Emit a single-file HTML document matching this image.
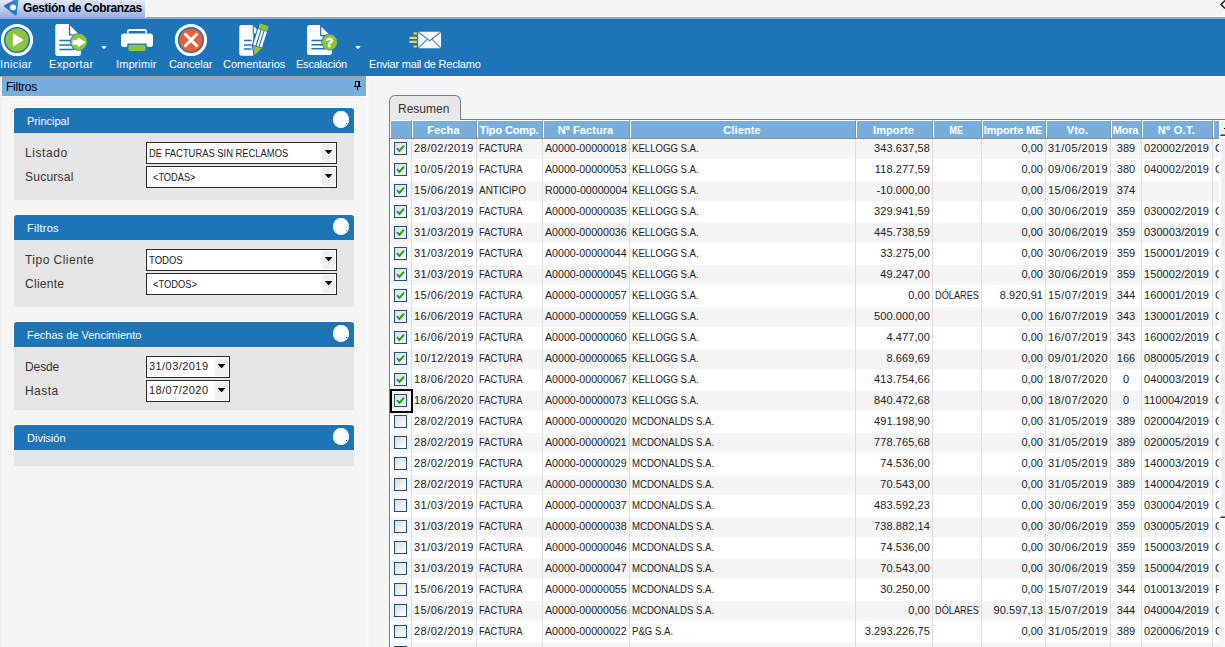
<!DOCTYPE html>
<html lang="es"><head><meta charset="utf-8"><title>Gestión de Cobranzas</title>
<style>
html,body{margin:0;padding:0;}
body{width:1225px;height:647px;overflow:hidden;position:relative;background:#f5f5f5;
 font-family:"Liberation Sans",sans-serif;font-size:11px;color:#222;}
div,span,i,b{box-sizing:border-box;}
.abs{position:absolute;}

/* window title tab */
.wtab{position:absolute;left:0;top:0;width:146px;height:18px;
 background:linear-gradient(#e2e9f9 0%,#c3d1f2 45%,#92abe2 100%);border-right:1px solid #fff;}
.wtab span{position:absolute;left:23px;top:1px;font-weight:bold;font-size:12px;color:#000;white-space:nowrap;letter-spacing:-0.39px;}
.wline1{position:absolute;left:146px;right:0;top:16px;height:1px;background:#fdfdfd;}
.wline2{position:absolute;left:146px;right:0;top:17px;height:1px;background:#a0a0a0;}
.wline3{position:absolute;left:0;right:0;top:18px;height:1px;background:#8aa8dc;}

/* toolbar */
.tb{position:absolute;left:0;top:19px;width:1225px;height:57px;background:#1d74b7;}
.tb .lbl{position:absolute;top:38px;color:#fff;font-size:11px;white-space:nowrap;line-height:14px;}
.tb svg{position:absolute;overflow:visible;}
.tbline{position:absolute;left:0;top:76px;width:366px;height:1px;background:#a2a2a2;}
.tbline2{position:absolute;left:366px;top:76px;width:859px;height:1px;background:#fff;}
.dline{position:absolute;left:2px;top:96px;width:364px;height:1px;background:#fdfdfd;}

/* dock panel */
.dockl{position:absolute;left:0;top:77px;width:2px;height:570px;background:#efefef;}
.dhead{position:absolute;left:2px;top:77px;width:364px;height:19px;background:#78aedc;border-right:1px solid #a2a2a2;}
.dhead span{position:absolute;left:4px;top:3px;font-size:12px;color:#000;}
.dstrip{position:absolute;left:366px;top:77px;width:3px;height:570px;background:#f8f8f8;}

.ph{position:absolute;left:14px;width:340px;height:25px;background:#1d74b7;border-radius:3px 3px 0 0;box-shadow:0 -1px 0 #fafafa,-1px 0 0 #fafafa,1px 0 0 #fafafa;}
.ph span{position:absolute;left:13px;top:7px;color:#fff;font-size:11px;white-space:nowrap;}
.ph i{position:absolute;left:319px;top:3px;width:16px;height:17px;border-radius:50%;background:#fff;box-shadow:inset 0 0 0 1px #eaeef2;}
.ph i:after{content:"";position:absolute;left:13px;top:12px;width:1px;height:1px;background:#1d74b7;}
.pb{position:absolute;left:14px;width:340px;background:#e6e6e6;}
.fl{position:absolute;left:25px;font-size:12px;line-height:15px;color:#333;white-space:nowrap;}
.combo{position:absolute;left:146px;height:22px;border:1px solid #2a2a2a;background:#fff;}
.combo span{position:absolute;left:2px;top:4px;font-size:11px;color:#222;white-space:nowrap;transform-origin:0 50%;}
.combo i{position:absolute;right:1px;top:1px;width:13px;height:18px;background:#f0f0f0;}
.combo i:after{content:"";position:absolute;left:2.8px;top:6px;width:7.6px;height:4.4px;background:#000;clip-path:polygon(0 0,100% 0,50% 100%);}

/* tabs + grid */
.tabstrip{position:absolute;left:389px;top:95px;width:836px;height:26px;}
.tabstrip:after{content:"";position:absolute;left:71px;right:0;top:24px;height:1px;background:#6f808c;box-shadow:0 1px 0 #fff;}
.tabstrip:before{content:"";position:absolute;left:0;top:24px;width:1px;height:600px;background:#6f808c;}
.tab{position:absolute;left:0;top:0;width:72px;height:25px;border:1px solid #6f808c;border-bottom:0;border-radius:6px 6px 0 0;background:#e8e8e8;}
.tab span{position:absolute;left:8px;top:6px;font-size:12px;color:#333;}

.grid{position:absolute;left:390px;top:120px;width:829px;height:527px;overflow:hidden;background:#fff;}
.ghead{position:absolute;left:0;top:0;width:900px;height:19px;background:#78aedc;border-bottom:1px solid #8e8e8e;}
.hc{position:absolute;top:0;height:18px;border-top:1px solid #fff;border-left:1px solid #fff;border-right:1px solid #8c8c8c;text-align:center;color:#fff;font-size:11px;font-weight:bold;white-space:nowrap;overflow:hidden;padding-right:2px;}
.hc span{position:relative;top:3px;}
.gr{position:absolute;left:0;width:900px;height:21px;background:#fff;}
.gr.odd{background:#f5f5f5;border-bottom:1px solid #fff;}
.c{position:absolute;top:0;height:21px;line-height:18px;font-size:11px;color:#222;white-space:nowrap;overflow:hidden;padding:0 3px 0 2px;}
.c.ar{text-align:right;}
.c.ac{text-align:center;}
.vl{position:absolute;top:19px;width:1px;height:600px;background:#dedede;}
.cb{position:absolute;left:4px;top:3px;width:13px;height:13px;border:1px solid #1c5180;background:linear-gradient(135deg,#dcdcd8,#fff);}
.cb svg{position:absolute;left:0;top:0;}
.focus{position:absolute;left:0;width:23px;height:24px;border:2px solid #000;z-index:3;}

.vsb{position:absolute;left:1219px;top:120px;width:6px;height:527px;background:#f8f8f8;}
.vsb-btn{position:absolute;left:0;top:0;width:6px;height:16px;background:#f0f0f0;border-left:2px solid #fff;border-top:2px solid #fff;border-bottom:1px solid #404040;box-shadow:inset 0 -1px 0 #909090;}
.vsb-btn span{position:absolute;left:3px;top:6px;width:1px;height:1px;background:#000;}
.vsb-thumb{position:absolute;left:0;top:16px;width:6px;height:382px;background:#f0f0f0;border-left:2px solid #fff;border-top:2px solid #fff;border-bottom:1px solid #404040;box-shadow:inset 0 -1px 0 #909090;}
.sx{display:inline-block;transform-origin:0 50%;}
.hc span{display:inline-block;transform-origin:50% 50%;}
.wl120{position:absolute;left:390px;top:120px;width:835px;height:1px;background:#fff;}

</style></head>
<body>
<!-- window title -->
<div class="wtab">
<svg class="abs" style="left:3px;top:0" width="18" height="17" viewBox="0 0 18 17"><defs><linearGradient id="lg" x1="1" y1="0" x2="0" y2="1"><stop offset="0" stop-color="#2e93c8"/><stop offset="1" stop-color="#1868b0"/></linearGradient></defs><path d="M2.4 6.1 L14.4 -0.4 L12.5 14.4 Z" fill="url(#lg)" stroke="url(#lg)" stroke-width="2.4" stroke-linejoin="round"/><circle cx="10" cy="7.4" r="2.9" fill="#fff"/></svg>
<span>Gestión de Cobranzas</span></div>
<div class="wline1"></div><div class="wline2"></div><div class="wline3"></div>
<svg class="abs" style="left:1218px;top:0" width="7" height="10" viewBox="0 0 7 10"><path d="M7 0.5 L3 4.5 L7 8.5" fill="none" stroke="#111" stroke-width="1.35"/></svg>

<!-- toolbar -->
<div class="tb">
<!-- Iniciar -->
<svg style="left:0;top:4px" width="34" height="34" viewBox="0 0 34 34"><circle cx="17" cy="17" r="14.6" fill="none" stroke="#fff" stroke-width="3"/><circle cx="17" cy="17" r="11.5" fill="#8bc43f"/><path d="M14 12.2 L21.8 17 L14 21.8 Z" fill="#fff" stroke="#fff" stroke-width="2.2" stroke-linejoin="round"/></svg>
<span class="lbl" style="left:0px;letter-spacing:0.38px">Iniciar</span>
<!-- Exportar -->
<svg style="left:54px;top:4px" width="36" height="34" viewBox="0 0 36 34"><path d="M3.5 1 H14.9 V12.6 H26.9 V30.7 Q26.9 32.9 24.7 32.9 H3.5 Q1.3 32.9 1.3 30.7 V3.2 Q1.3 1 3.5 1 Z" fill="#fff"/><path d="M16.1 2.6 L25 11.5 H17.5 Q16.1 11.5 16.1 10.1 Z" fill="#fff"/><path d="M5.3 17.4 H20 M5.3 22 H20 M5.3 26.4 H20" stroke="#1d74b7" stroke-width="1.5"/><circle cx="24.9" cy="18.95" r="8.9" fill="#1d74b7"/><circle cx="24.9" cy="18.95" r="8.1" fill="#8bc43f"/><path d="M18.9 17.4 H24 V15 L31.3 19.3 L24 23.8 V21.2 H18.9 Z" fill="#fff" stroke="#fff" stroke-width="0.8" stroke-linejoin="round"/></svg>
<svg style="left:101px;top:27px" width="6" height="4" viewBox="0 0 6 4"><path d="M0.2 0 H5.8 L3 3.2 Z" fill="#fff"/></svg>
<span class="lbl" style="left:49px;letter-spacing:0.36px">Exportar</span>
<!-- Imprimir -->
<svg style="left:120px;top:9px" width="34" height="24" viewBox="0 0 34 24"><path d="M7.9 5 V3.4 Q7.9 2 9.3 2 H24.7 Q26.1 2 26.1 3.4 V5" fill="none" stroke="#fff" stroke-width="1.8"/><path d="M4 5.6 H30 Q33 5.6 33 8.6 V16 Q33 19 30 19 H28.4 Q26.6 19 26.6 17.2 V15.4 H7.4 V17.2 Q7.4 19 5.6 19 H4 Q1 19 1 16 V8.6 Q1 5.6 4 5.6 Z" fill="#fff"/><rect x="8.4" y="16.8" width="17.2" height="6.2" rx="1.6" fill="#8bc43f"/></svg>
<span class="lbl" style="left:116px;letter-spacing:0.09px">Imprimir</span>
<!-- Cancelar -->
<svg style="left:174px;top:4px" width="34" height="34" viewBox="0 0 34 34"><circle cx="17" cy="17" r="14.6" fill="none" stroke="#fff" stroke-width="3"/><circle cx="17" cy="17" r="11.5" fill="#f05c36"/><path d="M11.4 11.4 L22.6 22.6 M22.6 11.4 L11.4 22.6" stroke="#fff" stroke-width="3" stroke-linecap="round"/></svg>
<span class="lbl" style="left:169px;letter-spacing:-0.1px">Cancelar</span>
<!-- Comentarios -->
<svg style="left:238px;top:4px" width="30" height="34" viewBox="0 0 30 34"><path d="M3.5 1.9 H14.7 V10.6 H15.3 V32.8 H3.5 Q1.3 32.8 1.3 30.6 V4.1 Q1.3 1.9 3.5 1.9 Z" fill="#fff"/><path d="M15.8 3.2 L22.5 10.3 H15.8 Z" fill="#fff"/><path d="M5.9 17.4 H13.6 M5.9 22 H13.6 M5.9 26.1 H13.6" stroke="#1d74b7" stroke-width="1.5"/><g transform="translate(21.5,17) rotate(17.5)"><path d="M-4.65 -16 H4.65 V7.3 L0 16 L-4.65 7.3 Z" fill="#1d74b7" stroke="#1d74b7" stroke-width="2.3" stroke-linejoin="miter"/><rect x="-4.7" y="-16" width="9.4" height="5.4" rx="1.3" fill="#8bc43f"/><rect x="-4.65" y="-10" width="9.3" height="16.5" fill="#fff"/><path d="M-1.55 -10 V6.5 M1.55 -10 V6.5" stroke="#1d74b7" stroke-width="1.1"/><path d="M-4.65 7.3 H4.65 L0 16 Z" fill="#8bc43f"/></g></svg>
<span class="lbl" style="left:223px;letter-spacing:-0.01px">Comentarios</span>
<!-- Escalacion -->
<svg style="left:306px;top:4px" width="34" height="34" viewBox="0 0 34 34"><path d="M3.3 1.9 H14.1 V13.2 H25.8 V29.8 Q25.8 31.9 23.7 31.9 H3.3 Q1.1 31.9 1.1 29.7 V4.1 Q1.1 1.9 3.3 1.9 Z" fill="#fff"/><path d="M15.3 3.8 L23.6 12.1 H16.7 Q15.3 12.1 15.3 10.7 Z" fill="#fff"/><path d="M5.4 17.4 H19 M5.4 21.7 H19 M5.4 25.8 H19" stroke="#1d74b7" stroke-width="1.5"/><circle cx="23.6" cy="19.1" r="8.4" fill="#1d74b7"/><circle cx="23.6" cy="19.1" r="7.6" fill="#8bc43f"/><text x="23.6" y="23.9" text-anchor="middle" font-family="Liberation Sans, sans-serif" font-weight="bold" font-size="13" fill="#fff" stroke="#fff" stroke-width="0.4">?</text></svg>
<svg style="left:355px;top:27px" width="6" height="4" viewBox="0 0 6 4"><path d="M0.2 0 H5.8 L3 3.2 Z" fill="#fff"/></svg>
<span class="lbl" style="left:296px;letter-spacing:-0.22px">Escalación</span>
<!-- Enviar mail -->
<svg style="left:408px;top:11px" width="36" height="20" viewBox="0 0 36 20"><rect x="10.2" y="1.8" width="22.8" height="16.4" rx="1.2" fill="#fff"/><path d="M10.6 2.2 L21.6 10.8 L32.6 2.2 M10.6 17.8 L19.2 9.2 M32.6 17.8 L24 9.2" fill="none" stroke="#3f88c5" stroke-width="1.15"/><path d="M6.5 3.4 H8 M2.3 7.9 H8 M2.3 11.9 H8 M6.5 16.5 H8" stroke="#f5d442" stroke-width="2.2" stroke-linecap="round"/></svg>
<span class="lbl" style="left:369px;letter-spacing:-0.21px">Enviar mail de Reclamo</span>
</div>
<div class="tbline"></div><div class="tbline2"></div><div class="dline"></div>
<!-- dock panel -->
<div class="dockl"></div>
<div class="dhead"><span style="letter-spacing:-0.24px">Filtros</span>
<svg class="abs" style="left:351px;top:4px" width="9" height="10" viewBox="0 0 9 10" shape-rendering="crispEdges"><rect x="2" y="0" width="5" height="1"/><rect x="2" y="1" width="1" height="4"/><rect x="3" y="1" width="2" height="4" fill="#8cc8ff"/><rect x="5" y="1" width="2" height="4"/><rect x="1" y="5" width="7" height="1"/><rect x="4" y="6" width="1" height="3"/></svg>
</div>
<div class="dstrip"></div>

<div class="ph" style="top:108px"><span>Principal</span><i></i></div>
<div class="pb" style="top:133px;height:67px"></div>
<div class="fl" style="top:146px;letter-spacing:0.59px">Listado</div>
<div class="combo" style="top:142px;width:191px"><span style="transform:scaleX(0.853)">DE FACTURAS SIN RECLAMOS</span><i></i></div>
<div class="fl" style="top:170px;letter-spacing:0.25px">Sucursal</div>
<div class="combo" style="top:166px;width:191px"><span style="left:6px;transform:scaleX(0.84)">&lt;TODAS&gt;</span><i></i></div>

<div class="ph" style="top:215px"><span style="letter-spacing:0.28px">Filtros</span><i></i></div>
<div class="pb" style="top:240px;height:67px"></div>
<div class="fl" style="top:253px;letter-spacing:0.47px">Tipo Cliente</div>
<div class="combo" style="top:249px;width:191px"><span style="transform:scaleX(0.864)">TODOS</span><i></i></div>
<div class="fl" style="top:277px;letter-spacing:0.28px">Cliente</div>
<div class="combo" style="top:273px;width:191px"><span style="left:6px;transform:scaleX(0.85)">&lt;TODOS&gt;</span><i></i></div>

<div class="ph" style="top:322px"><span>Fechas de Vencimiento</span><i></i></div>
<div class="pb" style="top:347px;height:63px"></div>
<div class="fl" style="top:360px;letter-spacing:-0.1px">Desde</div>
<div class="combo" style="top:356px;width:84px"><span style="left:2px;top:3px;letter-spacing:0.44px">31/03/2019</span><i></i></div>
<div class="fl" style="top:384px;letter-spacing:0.43px">Hasta</div>
<div class="combo" style="top:380px;width:84px"><span style="left:2px;top:3px;letter-spacing:0.44px">18/07/2020</span><i></i></div>

<div class="ph" style="top:425px"><span>División</span><i></i></div>
<div class="pb" style="top:450px;height:16px"></div>
<div class="tabstrip"><div class="tab"><span>Resumen</span></div></div>
<div class="wl120"></div><div class="grid">
<div class="ghead">
<div class="hc" style="left:0px;width:22px"><span></span></div><div class="hc" style="left:22px;width:65px"><span style="letter-spacing:0.12px">Fecha</span></div><div class="hc" style="left:87px;width:66px"><span style="letter-spacing:-0.15px">Tipo Comp.</span></div><div class="hc" style="left:153px;width:87px"><span style="letter-spacing:0.07px">Nº Factura</span></div><div class="hc" style="left:240px;width:226px"><span style="letter-spacing:0.14px">Cliente</span></div><div class="hc" style="left:466px;width:77px"><span style="letter-spacing:0.09px">Importe</span></div><div class="hc" style="left:543px;width:49px"><span style="transform:scaleX(0.812)">ME</span></div><div class="hc" style="left:592px;width:64px"><span style="letter-spacing:-0.14px">Importe ME</span></div><div class="hc" style="left:656px;width:65px"><span style="letter-spacing:0.23px">Vto.</span></div><div class="hc" style="left:721px;width:31px"><span style="letter-spacing:-0.15px">Mora</span></div><div class="hc" style="left:752px;width:71px"><span style="letter-spacing:0.30px">Nº O.T.</span></div><div class="hc" style="left:823px;width:87px"><span></span></div>
</div>
<div class="gr odd" style="top:19px"><div class="c" style="left:0;width:22px"><i class="cb"><svg viewBox="0 0 11 11" width="11" height="11"><path d="M2 5.2 L4.4 8 L9 2.6" fill="none" stroke="#1ea01e" stroke-width="2"/></svg></i></div><div class="c al" style="left:22px;width:65px"><span style="letter-spacing:0.48px">28/02/2019</span></div><div class="c al" style="left:87px;width:66px"><span class="sx" style="transform:scaleX(0.848)">FACTURA</span></div><div class="c al" style="left:153px;width:87px"><span class="sx" style="transform:scaleX(0.968)">A0000-00000018</span></div><div class="c al" style="left:240px;width:226px"><span class="sx" style="transform:scaleX(0.872)">KELLOGG S.A.</span></div><div class="c ar" style="left:466px;width:77px"><span style="letter-spacing:0.09px">343.637,58</span></div><div class="c al" style="left:543px;width:49px"></div><div class="c ar" style="left:592px;width:64px"><span style="letter-spacing:0.05px">0,00</span></div><div class="c al" style="left:656px;width:65px"><span style="letter-spacing:0.5px">31/05/2019</span></div><div class="c ac" style="left:721px;width:31px">389</div><div class="c al" style="left:752px;width:71px"><span style="letter-spacing:0.07px">020002/2019</span></div><div class="c al" style="left:823px;width:87px">C</div></div>
<div class="gr" style="top:40px"><div class="c" style="left:0;width:22px"><i class="cb"><svg viewBox="0 0 11 11" width="11" height="11"><path d="M2 5.2 L4.4 8 L9 2.6" fill="none" stroke="#1ea01e" stroke-width="2"/></svg></i></div><div class="c al" style="left:22px;width:65px"><span style="letter-spacing:0.48px">10/05/2019</span></div><div class="c al" style="left:87px;width:66px"><span class="sx" style="transform:scaleX(0.848)">FACTURA</span></div><div class="c al" style="left:153px;width:87px"><span class="sx" style="transform:scaleX(0.968)">A0000-00000053</span></div><div class="c al" style="left:240px;width:226px"><span class="sx" style="transform:scaleX(0.872)">KELLOGG S.A.</span></div><div class="c ar" style="left:466px;width:77px"><span style="letter-spacing:0.09px">118.277,59</span></div><div class="c al" style="left:543px;width:49px"></div><div class="c ar" style="left:592px;width:64px"><span style="letter-spacing:0.05px">0,00</span></div><div class="c al" style="left:656px;width:65px"><span style="letter-spacing:0.5px">09/06/2019</span></div><div class="c ac" style="left:721px;width:31px">380</div><div class="c al" style="left:752px;width:71px"><span style="letter-spacing:0.07px">040002/2019</span></div><div class="c al" style="left:823px;width:87px">C</div></div>
<div class="gr odd" style="top:61px"><div class="c" style="left:0;width:22px"><i class="cb"><svg viewBox="0 0 11 11" width="11" height="11"><path d="M2 5.2 L4.4 8 L9 2.6" fill="none" stroke="#1ea01e" stroke-width="2"/></svg></i></div><div class="c al" style="left:22px;width:65px"><span style="letter-spacing:0.48px">15/06/2019</span></div><div class="c al" style="left:87px;width:66px"><span class="sx" style="transform:scaleX(0.904)">ANTICIPO</span></div><div class="c al" style="left:153px;width:87px"><span class="sx" style="transform:scaleX(0.968)">R0000-00000004</span></div><div class="c al" style="left:240px;width:226px"><span class="sx" style="transform:scaleX(0.872)">KELLOGG S.A.</span></div><div class="c ar" style="left:466px;width:77px"><span style="letter-spacing:0.09px">-10.000,00</span></div><div class="c al" style="left:543px;width:49px"></div><div class="c ar" style="left:592px;width:64px"><span style="letter-spacing:0.05px">0,00</span></div><div class="c al" style="left:656px;width:65px"><span style="letter-spacing:0.5px">15/06/2019</span></div><div class="c ac" style="left:721px;width:31px">374</div><div class="c al" style="left:752px;width:71px"></div><div class="c al" style="left:823px;width:87px"></div></div>
<div class="gr" style="top:82px"><div class="c" style="left:0;width:22px"><i class="cb"><svg viewBox="0 0 11 11" width="11" height="11"><path d="M2 5.2 L4.4 8 L9 2.6" fill="none" stroke="#1ea01e" stroke-width="2"/></svg></i></div><div class="c al" style="left:22px;width:65px"><span style="letter-spacing:0.48px">31/03/2019</span></div><div class="c al" style="left:87px;width:66px"><span class="sx" style="transform:scaleX(0.848)">FACTURA</span></div><div class="c al" style="left:153px;width:87px"><span class="sx" style="transform:scaleX(0.968)">A0000-00000035</span></div><div class="c al" style="left:240px;width:226px"><span class="sx" style="transform:scaleX(0.872)">KELLOGG S.A.</span></div><div class="c ar" style="left:466px;width:77px"><span style="letter-spacing:0.09px">329.941,59</span></div><div class="c al" style="left:543px;width:49px"></div><div class="c ar" style="left:592px;width:64px"><span style="letter-spacing:0.05px">0,00</span></div><div class="c al" style="left:656px;width:65px"><span style="letter-spacing:0.5px">30/06/2019</span></div><div class="c ac" style="left:721px;width:31px">359</div><div class="c al" style="left:752px;width:71px"><span style="letter-spacing:0.07px">030002/2019</span></div><div class="c al" style="left:823px;width:87px">C</div></div>
<div class="gr odd" style="top:103px"><div class="c" style="left:0;width:22px"><i class="cb"><svg viewBox="0 0 11 11" width="11" height="11"><path d="M2 5.2 L4.4 8 L9 2.6" fill="none" stroke="#1ea01e" stroke-width="2"/></svg></i></div><div class="c al" style="left:22px;width:65px"><span style="letter-spacing:0.48px">31/03/2019</span></div><div class="c al" style="left:87px;width:66px"><span class="sx" style="transform:scaleX(0.848)">FACTURA</span></div><div class="c al" style="left:153px;width:87px"><span class="sx" style="transform:scaleX(0.968)">A0000-00000036</span></div><div class="c al" style="left:240px;width:226px"><span class="sx" style="transform:scaleX(0.872)">KELLOGG S.A.</span></div><div class="c ar" style="left:466px;width:77px"><span style="letter-spacing:0.09px">445.738,59</span></div><div class="c al" style="left:543px;width:49px"></div><div class="c ar" style="left:592px;width:64px"><span style="letter-spacing:0.05px">0,00</span></div><div class="c al" style="left:656px;width:65px"><span style="letter-spacing:0.5px">30/06/2019</span></div><div class="c ac" style="left:721px;width:31px">359</div><div class="c al" style="left:752px;width:71px"><span style="letter-spacing:0.07px">030003/2019</span></div><div class="c al" style="left:823px;width:87px">C</div></div>
<div class="gr" style="top:124px"><div class="c" style="left:0;width:22px"><i class="cb"><svg viewBox="0 0 11 11" width="11" height="11"><path d="M2 5.2 L4.4 8 L9 2.6" fill="none" stroke="#1ea01e" stroke-width="2"/></svg></i></div><div class="c al" style="left:22px;width:65px"><span style="letter-spacing:0.48px">31/03/2019</span></div><div class="c al" style="left:87px;width:66px"><span class="sx" style="transform:scaleX(0.848)">FACTURA</span></div><div class="c al" style="left:153px;width:87px"><span class="sx" style="transform:scaleX(0.968)">A0000-00000044</span></div><div class="c al" style="left:240px;width:226px"><span class="sx" style="transform:scaleX(0.872)">KELLOGG S.A.</span></div><div class="c ar" style="left:466px;width:77px"><span style="letter-spacing:0.09px">33.275,00</span></div><div class="c al" style="left:543px;width:49px"></div><div class="c ar" style="left:592px;width:64px"><span style="letter-spacing:0.05px">0,00</span></div><div class="c al" style="left:656px;width:65px"><span style="letter-spacing:0.5px">30/06/2019</span></div><div class="c ac" style="left:721px;width:31px">359</div><div class="c al" style="left:752px;width:71px"><span style="letter-spacing:0.07px">150001/2019</span></div><div class="c al" style="left:823px;width:87px">C</div></div>
<div class="gr odd" style="top:145px"><div class="c" style="left:0;width:22px"><i class="cb"><svg viewBox="0 0 11 11" width="11" height="11"><path d="M2 5.2 L4.4 8 L9 2.6" fill="none" stroke="#1ea01e" stroke-width="2"/></svg></i></div><div class="c al" style="left:22px;width:65px"><span style="letter-spacing:0.48px">31/03/2019</span></div><div class="c al" style="left:87px;width:66px"><span class="sx" style="transform:scaleX(0.848)">FACTURA</span></div><div class="c al" style="left:153px;width:87px"><span class="sx" style="transform:scaleX(0.968)">A0000-00000045</span></div><div class="c al" style="left:240px;width:226px"><span class="sx" style="transform:scaleX(0.872)">KELLOGG S.A.</span></div><div class="c ar" style="left:466px;width:77px"><span style="letter-spacing:0.09px">49.247,00</span></div><div class="c al" style="left:543px;width:49px"></div><div class="c ar" style="left:592px;width:64px"><span style="letter-spacing:0.05px">0,00</span></div><div class="c al" style="left:656px;width:65px"><span style="letter-spacing:0.5px">30/06/2019</span></div><div class="c ac" style="left:721px;width:31px">359</div><div class="c al" style="left:752px;width:71px"><span style="letter-spacing:0.07px">150002/2019</span></div><div class="c al" style="left:823px;width:87px">C</div></div>
<div class="gr" style="top:166px"><div class="c" style="left:0;width:22px"><i class="cb"><svg viewBox="0 0 11 11" width="11" height="11"><path d="M2 5.2 L4.4 8 L9 2.6" fill="none" stroke="#1ea01e" stroke-width="2"/></svg></i></div><div class="c al" style="left:22px;width:65px"><span style="letter-spacing:0.48px">15/06/2019</span></div><div class="c al" style="left:87px;width:66px"><span class="sx" style="transform:scaleX(0.848)">FACTURA</span></div><div class="c al" style="left:153px;width:87px"><span class="sx" style="transform:scaleX(0.968)">A0000-00000057</span></div><div class="c al" style="left:240px;width:226px"><span class="sx" style="transform:scaleX(0.872)">KELLOGG S.A.</span></div><div class="c ar" style="left:466px;width:77px"><span style="letter-spacing:0.09px">0,00</span></div><div class="c al" style="left:543px;width:49px"><span class="sx" style="transform:scaleX(0.836)">DÓLARES</span></div><div class="c ar" style="left:592px;width:64px"><span style="letter-spacing:0.05px">8.920,91</span></div><div class="c al" style="left:656px;width:65px"><span style="letter-spacing:0.5px">15/07/2019</span></div><div class="c ac" style="left:721px;width:31px">344</div><div class="c al" style="left:752px;width:71px"><span style="letter-spacing:0.07px">160001/2019</span></div><div class="c al" style="left:823px;width:87px">C</div></div>
<div class="gr odd" style="top:187px"><div class="c" style="left:0;width:22px"><i class="cb"><svg viewBox="0 0 11 11" width="11" height="11"><path d="M2 5.2 L4.4 8 L9 2.6" fill="none" stroke="#1ea01e" stroke-width="2"/></svg></i></div><div class="c al" style="left:22px;width:65px"><span style="letter-spacing:0.48px">16/06/2019</span></div><div class="c al" style="left:87px;width:66px"><span class="sx" style="transform:scaleX(0.848)">FACTURA</span></div><div class="c al" style="left:153px;width:87px"><span class="sx" style="transform:scaleX(0.968)">A0000-00000059</span></div><div class="c al" style="left:240px;width:226px"><span class="sx" style="transform:scaleX(0.872)">KELLOGG S.A.</span></div><div class="c ar" style="left:466px;width:77px"><span style="letter-spacing:0.09px">500.000,00</span></div><div class="c al" style="left:543px;width:49px"></div><div class="c ar" style="left:592px;width:64px"><span style="letter-spacing:0.05px">0,00</span></div><div class="c al" style="left:656px;width:65px"><span style="letter-spacing:0.5px">16/07/2019</span></div><div class="c ac" style="left:721px;width:31px">343</div><div class="c al" style="left:752px;width:71px"><span style="letter-spacing:0.07px">130001/2019</span></div><div class="c al" style="left:823px;width:87px">C</div></div>
<div class="gr" style="top:208px"><div class="c" style="left:0;width:22px"><i class="cb"><svg viewBox="0 0 11 11" width="11" height="11"><path d="M2 5.2 L4.4 8 L9 2.6" fill="none" stroke="#1ea01e" stroke-width="2"/></svg></i></div><div class="c al" style="left:22px;width:65px"><span style="letter-spacing:0.48px">16/06/2019</span></div><div class="c al" style="left:87px;width:66px"><span class="sx" style="transform:scaleX(0.848)">FACTURA</span></div><div class="c al" style="left:153px;width:87px"><span class="sx" style="transform:scaleX(0.968)">A0000-00000060</span></div><div class="c al" style="left:240px;width:226px"><span class="sx" style="transform:scaleX(0.872)">KELLOGG S.A.</span></div><div class="c ar" style="left:466px;width:77px"><span style="letter-spacing:0.09px">4.477,00</span></div><div class="c al" style="left:543px;width:49px"></div><div class="c ar" style="left:592px;width:64px"><span style="letter-spacing:0.05px">0,00</span></div><div class="c al" style="left:656px;width:65px"><span style="letter-spacing:0.5px">16/07/2019</span></div><div class="c ac" style="left:721px;width:31px">343</div><div class="c al" style="left:752px;width:71px"><span style="letter-spacing:0.07px">160002/2019</span></div><div class="c al" style="left:823px;width:87px">C</div></div>
<div class="gr odd" style="top:229px"><div class="c" style="left:0;width:22px"><i class="cb"><svg viewBox="0 0 11 11" width="11" height="11"><path d="M2 5.2 L4.4 8 L9 2.6" fill="none" stroke="#1ea01e" stroke-width="2"/></svg></i></div><div class="c al" style="left:22px;width:65px"><span style="letter-spacing:0.48px">10/12/2019</span></div><div class="c al" style="left:87px;width:66px"><span class="sx" style="transform:scaleX(0.848)">FACTURA</span></div><div class="c al" style="left:153px;width:87px"><span class="sx" style="transform:scaleX(0.968)">A0000-00000065</span></div><div class="c al" style="left:240px;width:226px"><span class="sx" style="transform:scaleX(0.872)">KELLOGG S.A.</span></div><div class="c ar" style="left:466px;width:77px"><span style="letter-spacing:0.09px">8.669,69</span></div><div class="c al" style="left:543px;width:49px"></div><div class="c ar" style="left:592px;width:64px"><span style="letter-spacing:0.05px">0,00</span></div><div class="c al" style="left:656px;width:65px"><span style="letter-spacing:0.5px">09/01/2020</span></div><div class="c ac" style="left:721px;width:31px">166</div><div class="c al" style="left:752px;width:71px"><span style="letter-spacing:0.07px">080005/2019</span></div><div class="c al" style="left:823px;width:87px">C</div></div>
<div class="gr" style="top:250px"><div class="c" style="left:0;width:22px"><i class="cb"><svg viewBox="0 0 11 11" width="11" height="11"><path d="M2 5.2 L4.4 8 L9 2.6" fill="none" stroke="#1ea01e" stroke-width="2"/></svg></i></div><div class="c al" style="left:22px;width:65px"><span style="letter-spacing:0.48px">18/06/2020</span></div><div class="c al" style="left:87px;width:66px"><span class="sx" style="transform:scaleX(0.848)">FACTURA</span></div><div class="c al" style="left:153px;width:87px"><span class="sx" style="transform:scaleX(0.968)">A0000-00000067</span></div><div class="c al" style="left:240px;width:226px"><span class="sx" style="transform:scaleX(0.872)">KELLOGG S.A.</span></div><div class="c ar" style="left:466px;width:77px"><span style="letter-spacing:0.09px">413.754,66</span></div><div class="c al" style="left:543px;width:49px"></div><div class="c ar" style="left:592px;width:64px"><span style="letter-spacing:0.05px">0,00</span></div><div class="c al" style="left:656px;width:65px"><span style="letter-spacing:0.5px">18/07/2020</span></div><div class="c ac" style="left:721px;width:31px">0</div><div class="c al" style="left:752px;width:71px"><span style="letter-spacing:0.07px">040003/2019</span></div><div class="c al" style="left:823px;width:87px">C</div></div>
<div class="gr odd" style="top:271px"><div class="c" style="left:0;width:22px"><i class="cb"><svg viewBox="0 0 11 11" width="11" height="11"><path d="M2 5.2 L4.4 8 L9 2.6" fill="none" stroke="#1ea01e" stroke-width="2"/></svg></i></div><div class="c al" style="left:22px;width:65px"><span style="letter-spacing:0.48px">18/06/2020</span></div><div class="c al" style="left:87px;width:66px"><span class="sx" style="transform:scaleX(0.848)">FACTURA</span></div><div class="c al" style="left:153px;width:87px"><span class="sx" style="transform:scaleX(0.968)">A0000-00000073</span></div><div class="c al" style="left:240px;width:226px"><span class="sx" style="transform:scaleX(0.872)">KELLOGG S.A.</span></div><div class="c ar" style="left:466px;width:77px"><span style="letter-spacing:0.09px">840.472,68</span></div><div class="c al" style="left:543px;width:49px"></div><div class="c ar" style="left:592px;width:64px"><span style="letter-spacing:0.05px">0,00</span></div><div class="c al" style="left:656px;width:65px"><span style="letter-spacing:0.5px">18/07/2020</span></div><div class="c ac" style="left:721px;width:31px">0</div><div class="c al" style="left:752px;width:71px"><span style="letter-spacing:0.07px">110004/2019</span></div><div class="c al" style="left:823px;width:87px">C</div></div>
<div class="gr" style="top:292px"><div class="c" style="left:0;width:22px"><i class="cb"></i></div><div class="c al" style="left:22px;width:65px"><span style="letter-spacing:0.48px">28/02/2019</span></div><div class="c al" style="left:87px;width:66px"><span class="sx" style="transform:scaleX(0.848)">FACTURA</span></div><div class="c al" style="left:153px;width:87px"><span class="sx" style="transform:scaleX(0.968)">A0000-00000020</span></div><div class="c al" style="left:240px;width:226px"><span class="sx" style="transform:scaleX(0.872)">MCDONALDS S.A.</span></div><div class="c ar" style="left:466px;width:77px"><span style="letter-spacing:0.09px">491.198,90</span></div><div class="c al" style="left:543px;width:49px"></div><div class="c ar" style="left:592px;width:64px"><span style="letter-spacing:0.05px">0,00</span></div><div class="c al" style="left:656px;width:65px"><span style="letter-spacing:0.5px">31/05/2019</span></div><div class="c ac" style="left:721px;width:31px">389</div><div class="c al" style="left:752px;width:71px"><span style="letter-spacing:0.07px">020004/2019</span></div><div class="c al" style="left:823px;width:87px">C</div></div>
<div class="gr odd" style="top:313px"><div class="c" style="left:0;width:22px"><i class="cb"></i></div><div class="c al" style="left:22px;width:65px"><span style="letter-spacing:0.48px">28/02/2019</span></div><div class="c al" style="left:87px;width:66px"><span class="sx" style="transform:scaleX(0.848)">FACTURA</span></div><div class="c al" style="left:153px;width:87px"><span class="sx" style="transform:scaleX(0.968)">A0000-00000021</span></div><div class="c al" style="left:240px;width:226px"><span class="sx" style="transform:scaleX(0.872)">MCDONALDS S.A.</span></div><div class="c ar" style="left:466px;width:77px"><span style="letter-spacing:0.09px">778.765,68</span></div><div class="c al" style="left:543px;width:49px"></div><div class="c ar" style="left:592px;width:64px"><span style="letter-spacing:0.05px">0,00</span></div><div class="c al" style="left:656px;width:65px"><span style="letter-spacing:0.5px">31/05/2019</span></div><div class="c ac" style="left:721px;width:31px">389</div><div class="c al" style="left:752px;width:71px"><span style="letter-spacing:0.07px">020005/2019</span></div><div class="c al" style="left:823px;width:87px">C</div></div>
<div class="gr" style="top:334px"><div class="c" style="left:0;width:22px"><i class="cb"></i></div><div class="c al" style="left:22px;width:65px"><span style="letter-spacing:0.48px">28/02/2019</span></div><div class="c al" style="left:87px;width:66px"><span class="sx" style="transform:scaleX(0.848)">FACTURA</span></div><div class="c al" style="left:153px;width:87px"><span class="sx" style="transform:scaleX(0.968)">A0000-00000029</span></div><div class="c al" style="left:240px;width:226px"><span class="sx" style="transform:scaleX(0.872)">MCDONALDS S.A.</span></div><div class="c ar" style="left:466px;width:77px"><span style="letter-spacing:0.09px">74.536,00</span></div><div class="c al" style="left:543px;width:49px"></div><div class="c ar" style="left:592px;width:64px"><span style="letter-spacing:0.05px">0,00</span></div><div class="c al" style="left:656px;width:65px"><span style="letter-spacing:0.5px">31/05/2019</span></div><div class="c ac" style="left:721px;width:31px">389</div><div class="c al" style="left:752px;width:71px"><span style="letter-spacing:0.07px">140003/2019</span></div><div class="c al" style="left:823px;width:87px">C</div></div>
<div class="gr odd" style="top:355px"><div class="c" style="left:0;width:22px"><i class="cb"></i></div><div class="c al" style="left:22px;width:65px"><span style="letter-spacing:0.48px">28/02/2019</span></div><div class="c al" style="left:87px;width:66px"><span class="sx" style="transform:scaleX(0.848)">FACTURA</span></div><div class="c al" style="left:153px;width:87px"><span class="sx" style="transform:scaleX(0.968)">A0000-00000030</span></div><div class="c al" style="left:240px;width:226px"><span class="sx" style="transform:scaleX(0.872)">MCDONALDS S.A.</span></div><div class="c ar" style="left:466px;width:77px"><span style="letter-spacing:0.09px">70.543,00</span></div><div class="c al" style="left:543px;width:49px"></div><div class="c ar" style="left:592px;width:64px"><span style="letter-spacing:0.05px">0,00</span></div><div class="c al" style="left:656px;width:65px"><span style="letter-spacing:0.5px">31/05/2019</span></div><div class="c ac" style="left:721px;width:31px">389</div><div class="c al" style="left:752px;width:71px"><span style="letter-spacing:0.07px">140004/2019</span></div><div class="c al" style="left:823px;width:87px">C</div></div>
<div class="gr" style="top:376px"><div class="c" style="left:0;width:22px"><i class="cb"></i></div><div class="c al" style="left:22px;width:65px"><span style="letter-spacing:0.48px">31/03/2019</span></div><div class="c al" style="left:87px;width:66px"><span class="sx" style="transform:scaleX(0.848)">FACTURA</span></div><div class="c al" style="left:153px;width:87px"><span class="sx" style="transform:scaleX(0.968)">A0000-00000037</span></div><div class="c al" style="left:240px;width:226px"><span class="sx" style="transform:scaleX(0.872)">MCDONALDS S.A.</span></div><div class="c ar" style="left:466px;width:77px"><span style="letter-spacing:0.09px">483.592,23</span></div><div class="c al" style="left:543px;width:49px"></div><div class="c ar" style="left:592px;width:64px"><span style="letter-spacing:0.05px">0,00</span></div><div class="c al" style="left:656px;width:65px"><span style="letter-spacing:0.5px">30/06/2019</span></div><div class="c ac" style="left:721px;width:31px">359</div><div class="c al" style="left:752px;width:71px"><span style="letter-spacing:0.07px">030004/2019</span></div><div class="c al" style="left:823px;width:87px">C</div></div>
<div class="gr odd" style="top:397px"><div class="c" style="left:0;width:22px"><i class="cb"></i></div><div class="c al" style="left:22px;width:65px"><span style="letter-spacing:0.48px">31/03/2019</span></div><div class="c al" style="left:87px;width:66px"><span class="sx" style="transform:scaleX(0.848)">FACTURA</span></div><div class="c al" style="left:153px;width:87px"><span class="sx" style="transform:scaleX(0.968)">A0000-00000038</span></div><div class="c al" style="left:240px;width:226px"><span class="sx" style="transform:scaleX(0.872)">MCDONALDS S.A.</span></div><div class="c ar" style="left:466px;width:77px"><span style="letter-spacing:0.09px">738.882,14</span></div><div class="c al" style="left:543px;width:49px"></div><div class="c ar" style="left:592px;width:64px"><span style="letter-spacing:0.05px">0,00</span></div><div class="c al" style="left:656px;width:65px"><span style="letter-spacing:0.5px">30/06/2019</span></div><div class="c ac" style="left:721px;width:31px">359</div><div class="c al" style="left:752px;width:71px"><span style="letter-spacing:0.07px">030005/2019</span></div><div class="c al" style="left:823px;width:87px">C</div></div>
<div class="gr" style="top:418px"><div class="c" style="left:0;width:22px"><i class="cb"></i></div><div class="c al" style="left:22px;width:65px"><span style="letter-spacing:0.48px">31/03/2019</span></div><div class="c al" style="left:87px;width:66px"><span class="sx" style="transform:scaleX(0.848)">FACTURA</span></div><div class="c al" style="left:153px;width:87px"><span class="sx" style="transform:scaleX(0.968)">A0000-00000046</span></div><div class="c al" style="left:240px;width:226px"><span class="sx" style="transform:scaleX(0.872)">MCDONALDS S.A.</span></div><div class="c ar" style="left:466px;width:77px"><span style="letter-spacing:0.09px">74.536,00</span></div><div class="c al" style="left:543px;width:49px"></div><div class="c ar" style="left:592px;width:64px"><span style="letter-spacing:0.05px">0,00</span></div><div class="c al" style="left:656px;width:65px"><span style="letter-spacing:0.5px">30/06/2019</span></div><div class="c ac" style="left:721px;width:31px">359</div><div class="c al" style="left:752px;width:71px"><span style="letter-spacing:0.07px">150003/2019</span></div><div class="c al" style="left:823px;width:87px">C</div></div>
<div class="gr odd" style="top:439px"><div class="c" style="left:0;width:22px"><i class="cb"></i></div><div class="c al" style="left:22px;width:65px"><span style="letter-spacing:0.48px">31/03/2019</span></div><div class="c al" style="left:87px;width:66px"><span class="sx" style="transform:scaleX(0.848)">FACTURA</span></div><div class="c al" style="left:153px;width:87px"><span class="sx" style="transform:scaleX(0.968)">A0000-00000047</span></div><div class="c al" style="left:240px;width:226px"><span class="sx" style="transform:scaleX(0.872)">MCDONALDS S.A.</span></div><div class="c ar" style="left:466px;width:77px"><span style="letter-spacing:0.09px">70.543,00</span></div><div class="c al" style="left:543px;width:49px"></div><div class="c ar" style="left:592px;width:64px"><span style="letter-spacing:0.05px">0,00</span></div><div class="c al" style="left:656px;width:65px"><span style="letter-spacing:0.5px">30/06/2019</span></div><div class="c ac" style="left:721px;width:31px">359</div><div class="c al" style="left:752px;width:71px"><span style="letter-spacing:0.07px">150004/2019</span></div><div class="c al" style="left:823px;width:87px">C</div></div>
<div class="gr" style="top:460px"><div class="c" style="left:0;width:22px"><i class="cb"></i></div><div class="c al" style="left:22px;width:65px"><span style="letter-spacing:0.48px">15/06/2019</span></div><div class="c al" style="left:87px;width:66px"><span class="sx" style="transform:scaleX(0.848)">FACTURA</span></div><div class="c al" style="left:153px;width:87px"><span class="sx" style="transform:scaleX(0.968)">A0000-00000055</span></div><div class="c al" style="left:240px;width:226px"><span class="sx" style="transform:scaleX(0.872)">MCDONALDS S.A.</span></div><div class="c ar" style="left:466px;width:77px"><span style="letter-spacing:0.09px">30.250,00</span></div><div class="c al" style="left:543px;width:49px"></div><div class="c ar" style="left:592px;width:64px"><span style="letter-spacing:0.05px">0,00</span></div><div class="c al" style="left:656px;width:65px"><span style="letter-spacing:0.5px">15/07/2019</span></div><div class="c ac" style="left:721px;width:31px">344</div><div class="c al" style="left:752px;width:71px"><span style="letter-spacing:0.07px">010013/2019</span></div><div class="c al" style="left:823px;width:87px">F</div></div>
<div class="gr odd" style="top:481px"><div class="c" style="left:0;width:22px"><i class="cb"></i></div><div class="c al" style="left:22px;width:65px"><span style="letter-spacing:0.48px">15/06/2019</span></div><div class="c al" style="left:87px;width:66px"><span class="sx" style="transform:scaleX(0.848)">FACTURA</span></div><div class="c al" style="left:153px;width:87px"><span class="sx" style="transform:scaleX(0.968)">A0000-00000056</span></div><div class="c al" style="left:240px;width:226px"><span class="sx" style="transform:scaleX(0.872)">MCDONALDS S.A.</span></div><div class="c ar" style="left:466px;width:77px"><span style="letter-spacing:0.09px">0,00</span></div><div class="c al" style="left:543px;width:49px"><span class="sx" style="transform:scaleX(0.836)">DÓLARES</span></div><div class="c ar" style="left:592px;width:64px"><span style="letter-spacing:0.05px">90.597,13</span></div><div class="c al" style="left:656px;width:65px"><span style="letter-spacing:0.5px">15/07/2019</span></div><div class="c ac" style="left:721px;width:31px">344</div><div class="c al" style="left:752px;width:71px"><span style="letter-spacing:0.07px">040004/2019</span></div><div class="c al" style="left:823px;width:87px">C</div></div>
<div class="gr" style="top:502px"><div class="c" style="left:0;width:22px"><i class="cb"></i></div><div class="c al" style="left:22px;width:65px"><span style="letter-spacing:0.48px">28/02/2019</span></div><div class="c al" style="left:87px;width:66px"><span class="sx" style="transform:scaleX(0.848)">FACTURA</span></div><div class="c al" style="left:153px;width:87px"><span class="sx" style="transform:scaleX(0.968)">A0000-00000022</span></div><div class="c al" style="left:240px;width:226px"><span class="sx" style="transform:scaleX(0.872)">P&amp;G S.A.</span></div><div class="c ar" style="left:466px;width:77px"><span style="letter-spacing:0.09px">3.293.226,75</span></div><div class="c al" style="left:543px;width:49px"></div><div class="c ar" style="left:592px;width:64px"><span style="letter-spacing:0.05px">0,00</span></div><div class="c al" style="left:656px;width:65px"><span style="letter-spacing:0.5px">31/05/2019</span></div><div class="c ac" style="left:721px;width:31px">389</div><div class="c al" style="left:752px;width:71px"><span style="letter-spacing:0.07px">020006/2019</span></div><div class="c al" style="left:823px;width:87px">C</div></div>
<div class="gr odd" style="top:523px"><div class="c" style="left:0;width:22px"><i class="cb"></i></div><div class="c al" style="left:22px;width:65px"></div><div class="c al" style="left:87px;width:66px"></div><div class="c al" style="left:153px;width:87px"></div><div class="c al" style="left:240px;width:226px"></div><div class="c ar" style="left:466px;width:77px"></div><div class="c al" style="left:543px;width:49px"></div><div class="c ar" style="left:592px;width:64px"></div><div class="c al" style="left:656px;width:65px"></div><div class="c ac" style="left:721px;width:31px"></div><div class="c al" style="left:752px;width:71px"></div><div class="c al" style="left:823px;width:87px"></div></div>
<div class="focus" style="top:269px"></div><div class="vl" style="left:21px"></div><div class="vl" style="left:86px"></div><div class="vl" style="left:152px"></div><div class="vl" style="left:239px"></div><div class="vl" style="left:465px"></div><div class="vl" style="left:542px"></div><div class="vl" style="left:591px"></div><div class="vl" style="left:655px"></div><div class="vl" style="left:720px"></div><div class="vl" style="left:751px"></div><div class="vl" style="left:822px"></div>
</div>
<div class="vsb"><div class="vsb-btn"><span></span></div><div class="vsb-thumb"></div></div>
</body></html>
